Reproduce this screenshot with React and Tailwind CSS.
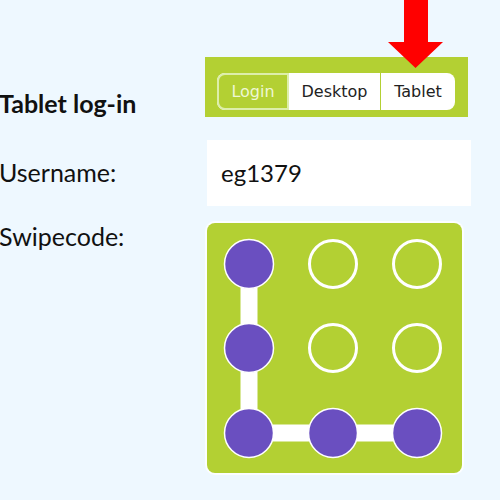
import React from 'react';

const dots = [
  [42, 41, true], [126, 41, false], [210, 41, false],
  [42, 125, true], [126, 125, false], [210, 125, false],
  [42, 210, true], [126, 210, true], [210, 210, true],
];

const SwipePad = () => (
  <div className="w-[255px] h-[250px] rounded-[8px] bg-[#b3d033] ring-2 ring-white/80">
    <svg width="255" height="250" viewBox="0 0 255 250">
      <polyline points="42,41 42,210 210,210" fill="none" stroke="#fff" strokeWidth="17" />
      {dots.map(([x, y, on]) =>
        on ? (
          <circle key={`${x}-${y}`} cx={x} cy={y} r="24.5" fill="#6a4fc0" stroke="#fff" strokeWidth="1.5" />
        ) : (
          <circle key={`${x}-${y}`} cx={x} cy={y} r="23.5" fill="none" stroke="#fff" strokeWidth="3" />
        )
      )}
    </svg>
  </div>
);

export default function App() {
  return (
    <div className="relative w-[500px] h-[500px] overflow-hidden bg-[#eef8ff] text-[#111] font-['Lato','Noto_Sans',sans-serif]">
      <svg className="absolute left-[388px] top-0" width="55" height="68" viewBox="0 0 55 68">
        <polygon points="16,0 40,0 40,42 55,42 27.5,68 0,42 16,42" fill="#f00" />
      </svg>

      <div className="flex flex-col pt-[57px]">
        <div className="flex items-start">
          <div className="w-[206px] -ml-[1px] mt-[31px] text-[25px] font-bold leading-[1.2]">Tablet log-in</div>
          <div className="w-[263px] h-[60px] bg-[#b3d033] pl-[12px] pt-[16px]">
            <div className="flex w-[238px] h-[37px] rounded-[8px] bg-white font-['DejaVu_Sans',sans-serif] text-[16px] text-[#222]">
              <div className="w-[72px] flex items-center justify-center rounded-l-[8px] bg-[#b3d033] border-2 border-[#ddeeaa] text-[#eef7d4]">
                Login
              </div>
              <div className="w-[92px] flex items-center justify-center border-r border-[#b3d033]">Desktop</div>
              <div className="flex-1 flex items-center justify-center">Tablet</div>
            </div>
          </div>
        </div>

        <div className="flex items-start mt-[22px]">
          <div className="w-[208px] -ml-[1px] mt-[17px] text-[25px] leading-[1.2]">Username:</div>
          <div className="w-[264px] h-[66px] bg-white flex items-center pl-[14px] text-[24px]">eg1379</div>
        </div>

        <div className="flex items-start mt-[17px]">
          <div className="w-[208px] -ml-[1px] -mt-[2px] text-[25px] leading-[1.2]">Swipecode:</div>
          <SwipePad />
        </div>
      </div>
    </div>
  );
}
